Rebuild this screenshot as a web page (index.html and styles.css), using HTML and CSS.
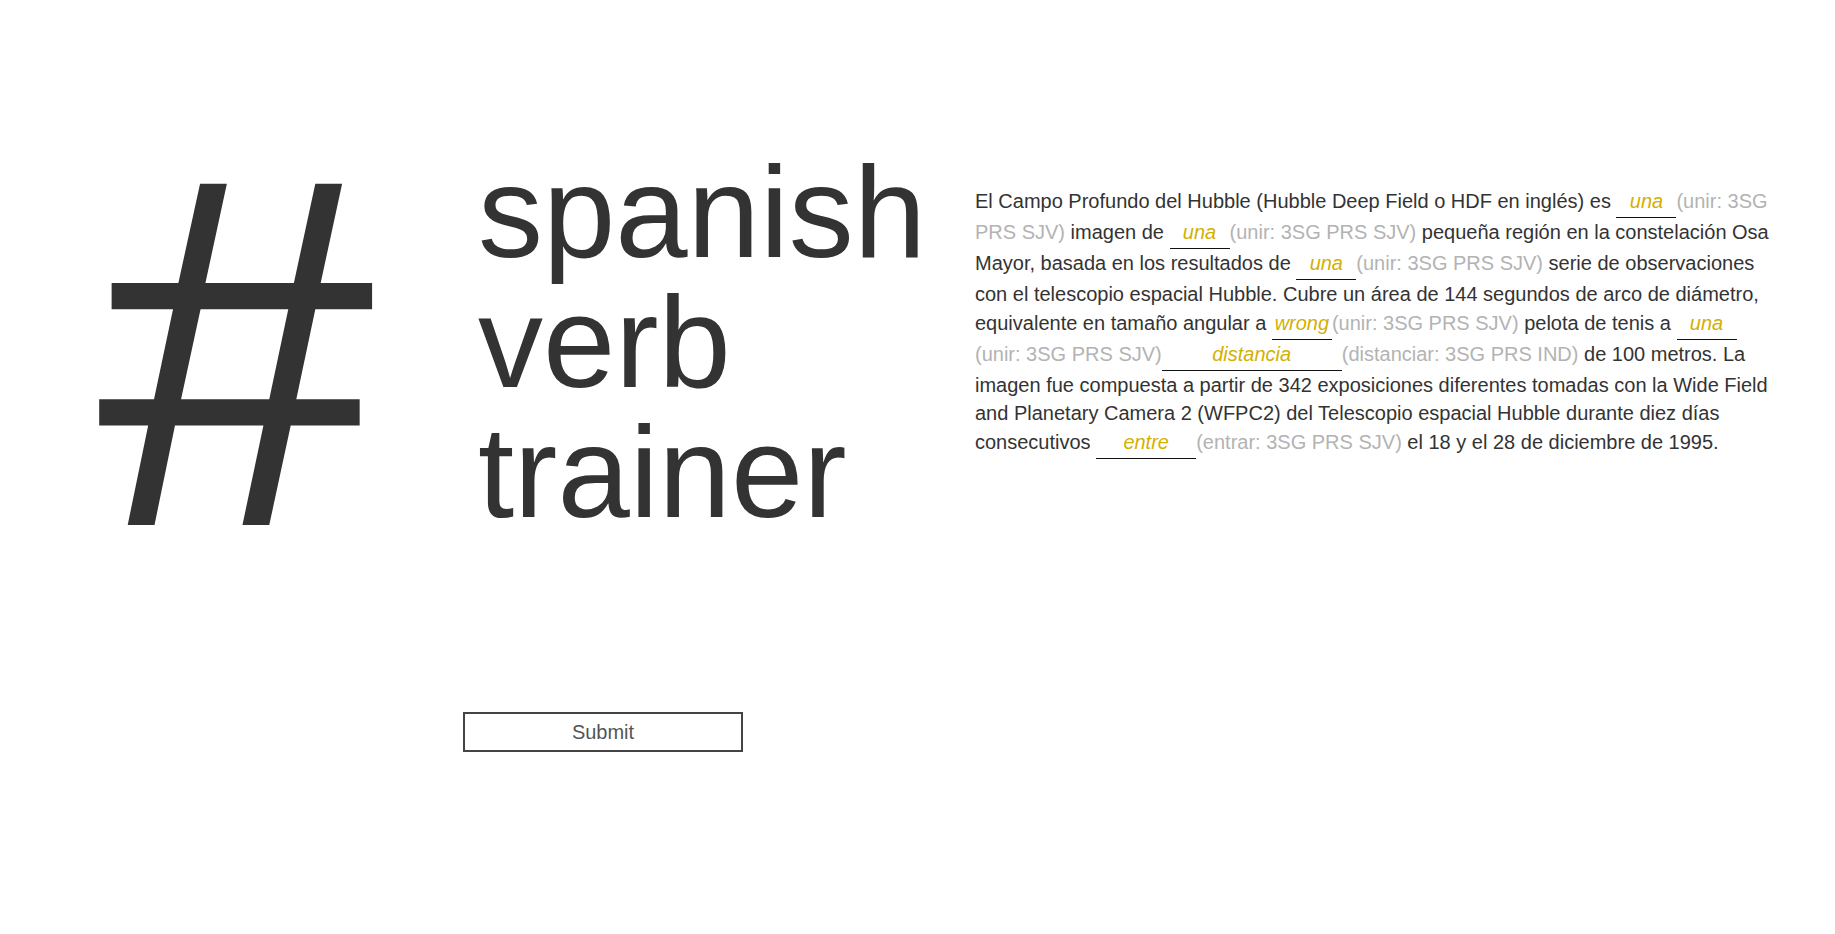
FILE: index.html
```html
<!DOCTYPE html>
<html lang="es">
<head>
<meta charset="utf-8">
<title>spanish verb trainer</title>
<link rel="stylesheet" href="styles.css">
</head>
<body>
<form class="page">
  <div class="main">
    <div class="hash-col"><span class="hash">#</span></div>
    <h1 class="title">spanish<br>verb<br>trainer</h1>
    <p class="passage">El Campo Profundo del Hubble (Hubble Deep Field o HDF en inglés) es <input class="blank" style="width:60px" value="una"><span class="hint">(unir: 3SG PRS SJV)</span> imagen de <input class="blank" style="width:60px" value="una"><span class="hint">(unir: 3SG PRS SJV)</span> pequeña región en la constelación Osa Mayor, basada en los resultados de <input class="blank" style="width:60px" value="una"><span class="hint">(unir: 3SG PRS SJV)</span> serie de observaciones con el telescopio espacial Hubble. Cubre un área de 144 segundos de arco de diámetro, equivalente en tamaño angular a <input class="blank" style="width:60px" value="wrong"><span class="hint">(unir: 3SG PRS SJV)</span> pelota de tenis a <input class="blank" style="width:60px" value="una"><span class="hint">(unir: 3SG PRS SJV)</span><input class="blank" style="width:180px" value="distancia"><span class="hint">(distanciar: 3SG PRS IND)</span> de 100 metros. La imagen fue compuesta a partir de 342 exposiciones diferentes tomadas con la Wide Field and Planetary Camera 2 (WFPC2) del Telescopio espacial Hubble durante diez días consecutivos <input class="blank" style="width:100px" value="entre"><span class="hint">(entrar: 3SG PRS SJV)</span> el 18 y el 28 de diciembre de 1995.</p>
  </div>
  <div class="actions">
    <button type="button" class="submit">Submit</button>
  </div>
</form>
</body>
</html>
```

FILE: styles.css
```css
html, body {
  margin: 0;
  padding: 0;
  background: #ffffff;
}

body {
  font-family: "Liberation Sans", Arial, sans-serif;
  color: #333333;
}

.page {
  display: flex;
  flex-direction: column;
}

.main {
  display: flex;
  align-items: flex-start;
  padding-top: 147px;
}

.hash-col {
  width: 478px;
  flex: none;
  padding-left: 97px;
  box-sizing: border-box;
}

.hash {
  display: block;
  font-size: 499px;
  line-height: 1;
  color: #333333;
  margin-top: -44px;
}

.title {
  width: 497px;
  flex: none;
  margin: 0;
  font-size: 130px;
  font-weight: normal;
  line-height: 130px;
  color: #333333;
}

.passage {
  width: 800px;
  flex: none;
  margin: 40px 0 0;
  font-size: 20px;
  line-height: 28.7px;
  color: #333333;
}

.blank {
  font-family: "Liberation Sans", Arial, sans-serif;
  font-size: 20px;
  font-style: italic;
  color: #d4b000;
  text-align: center;
  border: none;
  border-bottom: 1px solid #111111;
  padding: 3px 0 4px;
  margin: 0;
  background: transparent;
  outline: none;
  box-sizing: content-box;
}

.hint {
  color: #b3b3b3;
}

.actions {
  display: flex;
  padding-left: 463px;
  margin-top: 110px;
}

.submit {
  width: 280px;
  height: 40px;
  box-sizing: border-box;
  border: 2px solid #444444;
  background: #ffffff;
  color: #555555;
  font-family: "Liberation Sans", Arial, sans-serif;
  font-size: 20px;
  padding: 0;
}
```
